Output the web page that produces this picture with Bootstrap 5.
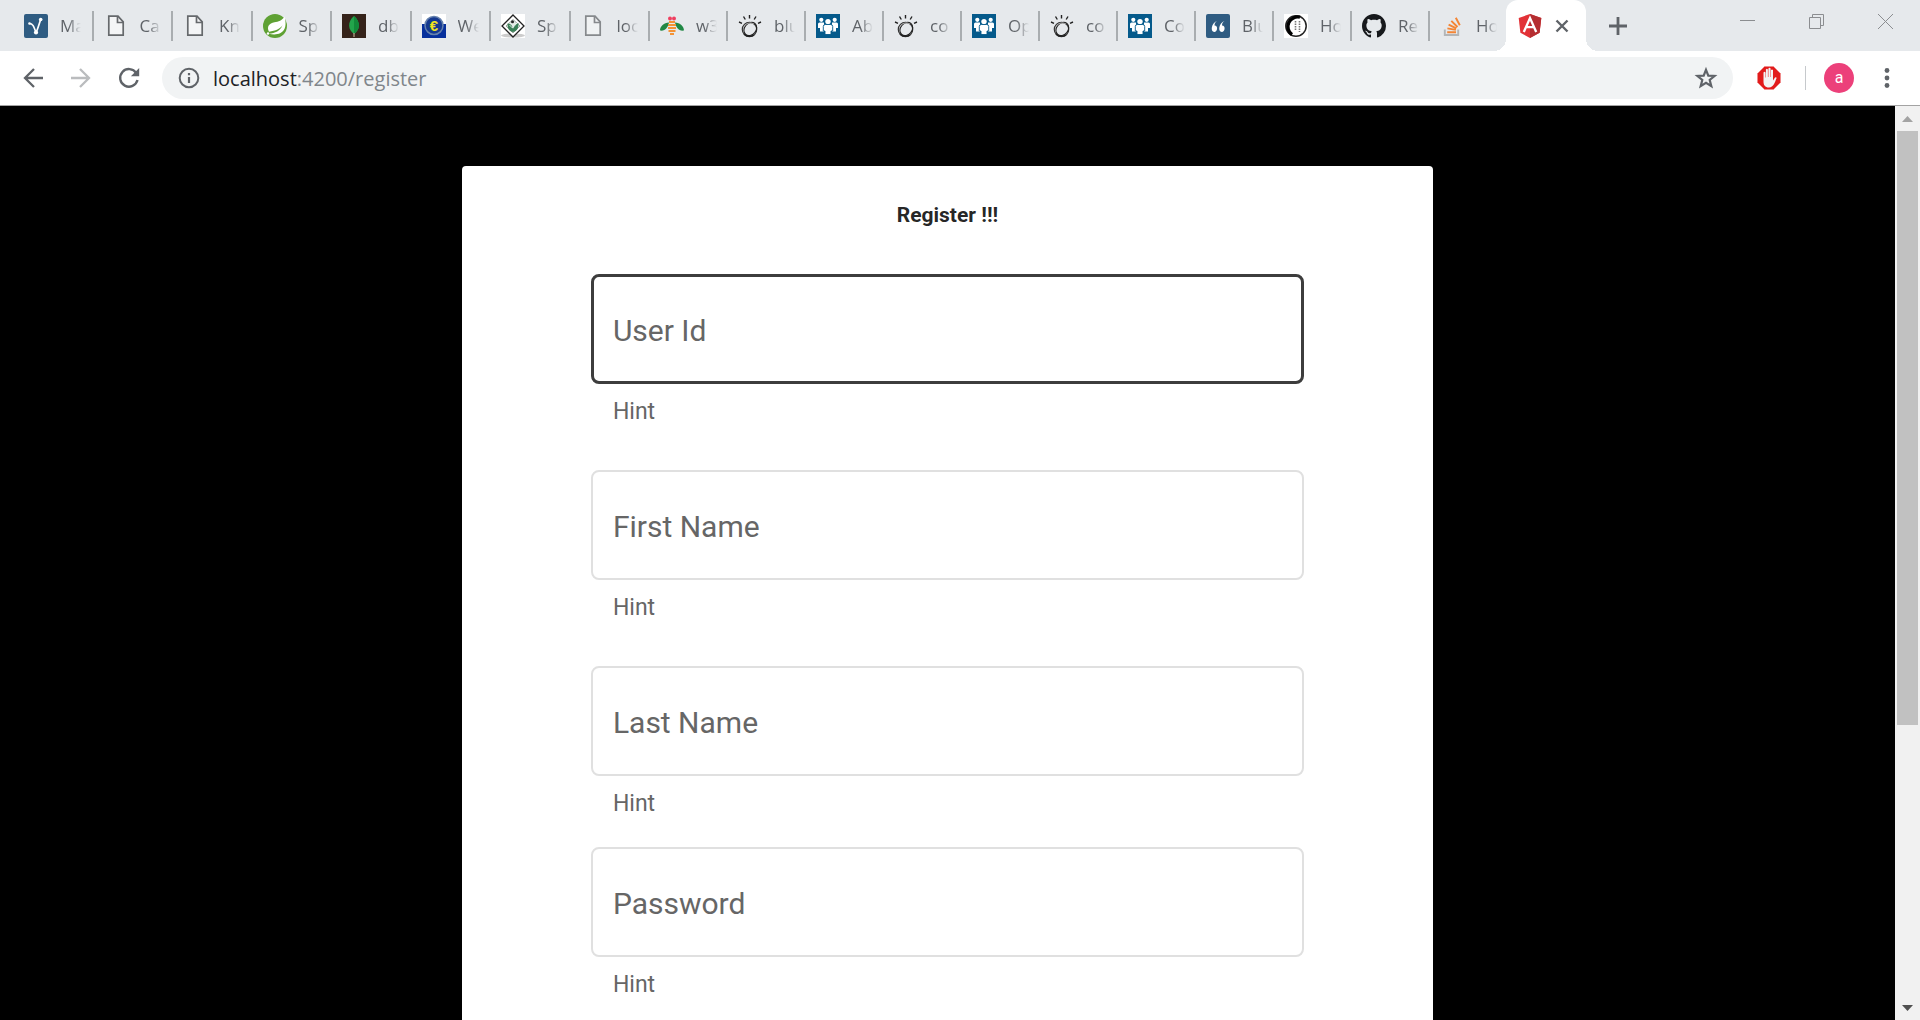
<!DOCTYPE html>
<html lang="en">
<head>
<meta charset="utf-8">
<meta name="viewport" content="width=device-width, initial-scale=1">
<title>Register</title>
<link href="https://cdn.jsdelivr.net/npm/bootstrap@5.3.0/dist/css/bootstrap.min.css" rel="stylesheet">
<style>
  .chrome { font-family: "Open Sans", "Noto Sans", sans-serif; color: #5f6368; }
  .chrome svg, .side-bar svg { display: block; flex: none; }
  .tab-strip { height: 51px; background: #e6e9ec; padding-left: 14px; }
  .tab-group-a { flex: 0 1 636px; min-width: 0; }
  .tab-group-b { flex: 0 1 856px; min-width: 0; }
  .tab-item { flex: 1 1 0; min-width: 0; height: 30px; padding-left: 10px; border-right: 2px solid #a9adb0; color: #5f6368; }
  .tab-item.last-tab { border-right: 0; }
  .tab-text { margin-left: 12px; width: 21px; overflow: hidden; white-space: nowrap; font-size: 17px; line-height: 24px;
    -webkit-mask-image: linear-gradient(90deg, #000 40%, transparent); mask-image: linear-gradient(90deg, #000 40%, transparent); }
  .live-tab { position: relative; width: 80px; background: #fff; border-radius: 12px 12px 0 0; padding-left: 12px; gap: 12px; }
  .live-tab::before, .live-tab::after { content: ""; position: absolute; bottom: 0; width: 12px; height: 12px; }
  .live-tab::before { left: -12px; background: radial-gradient(circle at 0 0, transparent 12px, #fff 12px); }
  .live-tab::after { right: -12px; background: radial-gradient(circle at 100% 0, transparent 12px, #fff 12px); }
  .plain-btn { background: none; border: 0; padding: 0; color: inherit; display: flex; align-items: center; justify-content: center; flex: none; }
  .new-tab { width: 44px; margin-left: 10px; }
  .win-btn { width: 69px; height: 42px; color: #8b8d90; }
  .tool-bar { height: 55px; background: #fff; border-bottom: 1px solid #a3a3a3; padding: 0 21px 0 9px; }
  .nav-icon { width: 48px; height: 42px; }
  .address { height: 42px; border-radius: 21px; background: #f1f3f4; margin: 0 12px 0 9px; padding: 0 15px 0 16px; }
  .address-text { font-size: 20px; line-height: 28px; color: #80868b; margin-left: 13px; padding-top: 1px; }
  .address-text b { font-weight: 400; color: #202124; }
  .bar-line { width: 1px; height: 24px; background: #c6c9cc; margin: 0 18px 0 12px; }
  .avatar { width: 30px; height: 30px; border-radius: 50%; background: #ec407a; color: #fff; font: 16px/28px Roboto, sans-serif; margin-right: 21px; }
  .menu-btn { width: 24px; height: 30px; }
  .page-area { background: #000; min-height: 0; }
  .page-body { font-family: Roboto, sans-serif; padding-top: 60px; min-width: 0; }
  .register-card { width: 51.25%; border: 0; border-radius: 4px; padding: 34px 129px 0; color: rgba(0,0,0,.87); }
  .register-title { font-size: 21px; line-height: 30px; font-weight: 700; margin-bottom: 44px; }
  .field { margin-bottom: 44px; }
  .field-tight { margin-bottom: 29px; }
  .field-box { height: 110px; border: 2px solid #e0e0e0; border-radius: 8px; padding: 0 24px; font-size: 30px; box-shadow: none; }
  .field-box:focus { border-color: #e0e0e0; box-shadow: none; }
  .field-box.current, .field-box.current:focus { border: 3px solid #3d3d3d; }
  .field-label { padding-left: 22px; padding-top: 3px; font-size: 30px; line-height: 36px; color: #666; pointer-events: none; }
  .field-hint { font-size: 23px; line-height: 28px; color: #666; padding: 14px 22px 0; height: 42px; }
  .side-bar { width: 25px; background: #f1f1f1; flex: none; }
  .side-arrow { width: 25px; height: 25px; }
  .side-track { padding: 0 2px; }
  .side-thumb { background: #c1c1c1; height: 68.7%; }
</style>
</head>
<body class="vh-100 overflow-hidden d-flex flex-column">

<svg width="0" height="0" class="position-absolute" aria-hidden="true">
  <symbol id="i-file" viewBox="0 0 24 24"><path d="M4.800 2.200h9.200l5.200 5.600v13.400h-14.400z" fill="#f4f5f6" stroke="#66696c" stroke-width="1.700"/><path d="M13.500 2.500v6h5.600" fill="none" stroke="#66696c" stroke-width="1.700"/></symbol>
  <symbol id="i-graph" viewBox="0 0 24 24"><rect width="24" height="24" rx="2" fill="#2f5c82"/><path d="M5.500 9.500c3 0 4 2 6.500 9c1-1 3-8 4.700-13" fill="none" stroke="#fff" stroke-width="1.700"/><circle cx="5.500" cy="9.500" r="1.300" fill="#fff"/><circle cx="12" cy="18.500" r="2.100" fill="#fff"/><circle cx="16.700" cy="5.500" r="1.800" fill="#fff"/></symbol>
  <symbol id="i-spring" viewBox="0 0 24 24"><circle cx="12" cy="12" r="12" fill="#5fa134"/><path d="M21.500 2.500c2 7 1.500 14-4 16.500c-4 2-8 1.500-11.500.8c6-.4 11.500-3 13.500-8.500c-2 3.500-7 5.500-13.500 6.500c-2.500-5 0-8.500 5.500-9.500c4-.7 7.500-1.700 10-5.800z" fill="#fff"/><circle cx="5" cy="19.500" r="1.200" fill="#fff"/></symbol>
  <symbol id="i-leaf" viewBox="0 0 24 24"><rect width="24" height="24" fill="#35231a"/><path d="M12 2c7 6 6 14 0 18c-6-4-7-12 0-18z" fill="#22a54b"/><path d="M12 2c7 6 6 14 0 18z" fill="#128a3a"/><path d="M12 19v4" stroke="#b9a48c" stroke-width="1.200"/></symbol>
  <symbol id="i-diamond" viewBox="0 0 24 24"><rect width="24" height="24" fill="#fff"/><ellipse cx="12" cy="21.500" rx="12" ry="2" fill="#ccc"/><path d="M12 1l11 11l-11 11l-11-11z" fill="#fff" stroke="#222" stroke-width="1.300"/><path d="M12 5.500l7 6.500l-7 7l-7-7z" fill="#e6ede8" stroke="#8a958d" stroke-width=".800"/><path d="M6.500 9.500c3 0 5 2 5.500 5.500c.5-3 2-5 5.500-6c0 5-1 8-5.500 9c-4.500-1-5.500-4-5.500-8.500z" fill="#3a7f56"/><circle cx="11.500" cy="7.800" r="1.500" fill="#222"/><path d="M8.500 11l3 3l5.500-6" fill="none" stroke="#fff" stroke-width=".800"/></symbol>
  <symbol id="i-bee" viewBox="0 0 24 24"><path d="M9 8.500c-5 0-9 4-9 8c5 1 8-3 9-8zM15 8.500c5 0 9 4 9 8c-5 1-8-3-9-8z" fill="#218845"/><circle cx="10" cy="4.500" r="2" fill="#ef4060"/><circle cx="14" cy="4.500" r="2" fill="#ef4060"/><path d="M9 8h6M8 11h8M8 14h8M8.500 17h7M10 20h4" stroke="#f49335" stroke-width="1.800"/></symbol>
  <symbol id="i-watson" viewBox="0 0 24 24"><circle cx="11.500" cy="15.500" r="7.200" fill="none" stroke="#333" stroke-width="1.200"/><ellipse cx="12.300" cy="15" rx="7.200" ry="5.800" fill="none" stroke="#222" stroke-width="1.100" transform="rotate(-50 12.300 15)"/><path d="M6 20q4 4 10 1" fill="none" stroke="#222" stroke-width="1.500"/><path d="M6 12q5-5 10-2" fill="none" stroke="#aaa"/><path d="M11.500 1v3.500M5.500 2.500l1.800 3M18 2.500l-1.800 3M1 8l3 1.400M23 8l-3 1.400" stroke="#222" stroke-width="1.400"/></symbol>
  <symbol id="i-people" viewBox="0 0 24 24"><rect width="24" height="24" fill="#055a8b"/><g fill="#fff"><circle cx="5.300" cy="5.800" r="2.100"/><circle cx="18.700" cy="5.800" r="2.100"/><path d="M2 10q0-1.500 1.500-1.500h4.500v9h-4v-3.500h-2zM22 10q0-1.500-1.500-1.500h-4.500v9h4v-3.500h2z"/><circle cx="12" cy="7.600" r="2.700"/><path d="M7.300 12.500q0-2 2-2h5.400q2 0 2 2v4.500h-1.700v3.500h-6v-3.500h-1.700z" stroke="#055a8b" stroke-width=".900"/></g></symbol>
  <symbol id="i-quote" viewBox="0 0 24 24"><rect width="24" height="24" rx="2" fill="#2f5c82"/><path d="M11 7c-2 1-2.500 3-2.500 4.500c4 0 3 6.500-.2 6.500c-4.300 0-3-9 2.700-11zM18.500 7c-2 1-2.500 3-2.500 4.500c4 0 3 6.500-.2 6.500c-4.300 0-3-9 2.700-11z" fill="#fff"/></symbol>
  <symbol id="i-ring" viewBox="0 0 24 24"><rect width="24" height="24" fill="#fff"/><circle cx="12" cy="12" r="10.200" fill="none" stroke="#222" stroke-width="1.500"/><path d="M16 3.200a9.800 9.800 0 0 0-8 17.500" fill="none" stroke="#000" stroke-width="3.400"/><path d="M11.500 7v10M15.500 7v11" stroke="#777" stroke-width="1.600" stroke-dasharray="1.500 1"/></symbol>
  <symbol id="i-github" viewBox="0 0 16 16"><path fill="#17191c" d="M8 0C3.580 0 0 3.580 0 8c0 3.540 2.290 6.530 5.470 7.590.4.070.55-.17.55-.38 0-.19-.01-.82-.01-1.490-2.010.37-2.530-.49-2.690-.94-.09-.23-.48-.94-.82-1.130-.28-.15-.68-.52-.01-.53.63-.01 1.080.58 1.230.82.72 1.210 1.870.87 2.330.66.07-.52.28-.87.51-1.070-1.780-.2-3.640-.89-3.640-3.950 0-.87.31-1.590.82-2.150-.08-.2-.36-1.020.08-2.120 0 0 .67-.21 2.200.82.64-.18 1.320-.27 2-.27s1.360.09 2 .27c1.530-1.040 2.200-.82 2.200-.82.44 1.100.16 1.920.08 2.120.51.56.82 1.270.82 2.150 0 3.070-1.870 3.750-3.650 3.950.29.25.54.73.54 1.480 0 1.070-.01 1.930-.01 2.200 0 .21.15.46.55.38A8.010 8.010 0 0 0 16 8c0-4.420-3.580-8-8-8z"/></symbol>
  <symbol id="i-stack" viewBox="0 0 24 24"><path d="M4.800 15.500v5.500h13.400v-5.500" fill="none" stroke="#b3b5b7" stroke-width="1.900"/><path d="M7.200 18.200h8.800M7.400 14.400l8.500 1.500M8.600 10.600l7.700 3.800M11.300 6.800l6.200 6.200M15.800 3.800l4 7.400" stroke="#f48534" stroke-width="1.900"/></symbol>
  <symbol id="i-angular" viewBox="0 0 24 24"><path d="M12 0l11.300 4l-1.700 14.700l-9.600 5.300l-9.600-5.300l-1.700-14.700z" fill="#e23237"/><path d="M12 0l11.300 4l-1.700 14.700l-9.600 5.300z" fill="#b52e31"/><path d="M5.800 18l6.200-14l6.200 14M8.800 13.200h6.400" fill="none" stroke="#fff" stroke-width="2.300"/></symbol>
</svg>

<header class="chrome flex-shrink-0">
  <div class="tab-strip d-flex">
    <div class="tab-group-a d-flex align-items-center">
      <a href="#" class="tab-item d-flex align-items-center text-decoration-none"><svg width="24" height="24"><use href="#i-graph"/></svg><span class="tab-text">Ma</span></a>
      <a href="#" class="tab-item d-flex align-items-center text-decoration-none"><svg width="24" height="24"><use href="#i-file"/></svg><span class="tab-text">Ca</span></a>
      <a href="#" class="tab-item d-flex align-items-center text-decoration-none"><svg width="24" height="24"><use href="#i-file"/></svg><span class="tab-text">Kn</span></a>
      <a href="#" class="tab-item d-flex align-items-center text-decoration-none"><svg width="24" height="24"><use href="#i-spring"/></svg><span class="tab-text">Sp</span></a>
      <a href="#" class="tab-item d-flex align-items-center text-decoration-none"><svg width="24" height="24"><use href="#i-leaf"/></svg><span class="tab-text">db</span></a>
      <a href="#" class="tab-item d-flex align-items-center text-decoration-none"><svg width="24" height="24" viewBox="0 0 24 24"><rect width="24" height="24" fill="#fff"/><path d="M0 10h24v14h-24z" fill="#07309c"/><circle cx="12" cy="11.500" r="9" fill="#15398f" stroke="#6682ad" stroke-width="1.500"/><text x="12" y="17" text-anchor="middle" font-family="Liberation Sans" font-weight="700" font-size="15" fill="#f1e51d">€</text></svg><span class="tab-text">We</span></a>
      <a href="#" class="tab-item d-flex align-items-center text-decoration-none"><svg width="24" height="24"><use href="#i-diamond"/></svg><span class="tab-text">Sp</span></a>
      <a href="#" class="tab-item d-flex align-items-center text-decoration-none"><svg width="24" height="24" opacity=".75"><use href="#i-file"/></svg><span class="tab-text">loc</span></a>
    </div>
    <div class="tab-group-b d-flex align-items-center">
      <a href="#" class="tab-item d-flex align-items-center text-decoration-none"><svg width="24" height="24"><use href="#i-bee"/></svg><span class="tab-text">w3</span></a>
      <a href="#" class="tab-item d-flex align-items-center text-decoration-none"><svg width="24" height="24"><use href="#i-watson"/></svg><span class="tab-text">blu</span></a>
      <a href="#" class="tab-item d-flex align-items-center text-decoration-none"><svg width="24" height="24"><use href="#i-people"/></svg><span class="tab-text">Ab</span></a>
      <a href="#" class="tab-item d-flex align-items-center text-decoration-none"><svg width="24" height="24"><use href="#i-watson"/></svg><span class="tab-text">co</span></a>
      <a href="#" class="tab-item d-flex align-items-center text-decoration-none"><svg width="24" height="24"><use href="#i-people"/></svg><span class="tab-text">Op</span></a>
      <a href="#" class="tab-item d-flex align-items-center text-decoration-none"><svg width="24" height="24"><use href="#i-watson"/></svg><span class="tab-text">co</span></a>
      <a href="#" class="tab-item d-flex align-items-center text-decoration-none"><svg width="24" height="24"><use href="#i-people"/></svg><span class="tab-text">Co</span></a>
      <a href="#" class="tab-item d-flex align-items-center text-decoration-none"><svg width="24" height="24"><use href="#i-quote"/></svg><span class="tab-text">Blu</span></a>
      <a href="#" class="tab-item d-flex align-items-center text-decoration-none"><svg width="24" height="24"><use href="#i-ring"/></svg><span class="tab-text">Ho</span></a>
      <a href="#" class="tab-item d-flex align-items-center text-decoration-none"><svg width="24" height="24"><use href="#i-github"/></svg><span class="tab-text">Re</span></a>
      <a href="#" class="tab-item last-tab d-flex align-items-center text-decoration-none"><svg width="24" height="24"><use href="#i-stack"/></svg><span class="tab-text">Ho</span></a>
    </div>
    <div class="live-tab d-flex align-items-center flex-shrink-0">
      <svg width="24" height="24"><use href="#i-angular"/></svg>
      <button type="button" class="plain-btn" aria-label="Close tab"><svg width="16" height="16" viewBox="0 0 16 16"><path d="M2.500 2.500l11 11M13.500 2.500l-11 11" stroke="#5f6368" stroke-width="2.400"/></svg></button>
    </div>
    <button type="button" class="plain-btn new-tab" aria-label="New tab"><svg width="18" height="18" viewBox="0 0 18 18"><path d="M9 0v18M0 9h18" stroke="#5f6368" stroke-width="2.800"/></svg></button>
    <div class="d-flex ms-auto">
      <button type="button" class="plain-btn win-btn" aria-label="Minimize"><svg width="15" height="15" viewBox="0 0 15 15"><path d="M0 6.500h15" stroke="currentColor"/></svg></button>
      <button type="button" class="plain-btn win-btn" aria-label="Restore"><svg width="15" height="15" viewBox="0 0 15 15"><path d="M.5 3.500h11v11h-11zM3.500 3.500v-3h11v11h-3" fill="none" stroke="currentColor"/></svg></button>
      <button type="button" class="plain-btn win-btn" aria-label="Close"><svg width="15" height="15" viewBox="0 0 15 15"><path d="M0 0l15 15M15 0l-15 15" stroke="currentColor"/></svg></button>
    </div>
  </div>

  <div class="tool-bar d-flex align-items-center">
    <button type="button" class="plain-btn nav-icon" aria-label="Back"><svg width="20" height="20" viewBox="0 0 20 20"><path d="M20 10h-18M11 1l-9 9l9 9" fill="none" stroke="#5f6368" stroke-width="2.300"/></svg></button>
    <button type="button" class="plain-btn nav-icon" aria-label="Forward"><svg width="20" height="20" viewBox="0 0 20 20"><path d="M0 10h18M9 1l9 9l-9 9" fill="none" stroke="#babcbe" stroke-width="2.300"/></svg></button>
    <button type="button" class="plain-btn nav-icon" aria-label="Reload"><svg width="22" height="22" viewBox="0 0 22 22"><path d="M18.300 6a8.800 8.800 0 1 0 1.200 7" fill="none" stroke="#5f6368" stroke-width="2.400"/><path d="M21.200 1v8.300h-8.300z" fill="#5f6368"/></svg></button>
    <div class="address d-flex align-items-center flex-grow-1">
      <svg width="22" height="22" viewBox="0 0 22 22"><circle cx="11" cy="11" r="9.300" fill="none" stroke="#5f6368" stroke-width="2"/><path d="M11 10v6M11 6v2.200" stroke="#5f6368" stroke-width="2.200"/></svg>
      <span class="address-text"><b>localhost</b>:4200/register</span>
      <button type="button" class="plain-btn ms-auto" aria-label="Bookmark"><svg width="24" height="24" viewBox="0 0 24 24"><path d="M12 3.800l2.300 5.800l6.300.4l-4.900 4l1.600 6.100l-5.300-3.400l-5.300 3.400l1.600-6.100l-4.900-4l6.300-.4z" fill="none" stroke="#5f6368" stroke-width="2.200"/></svg></button>
    </div>
    <button type="button" class="plain-btn nav-icon" aria-label="Ad blocker"><svg width="24" height="24" viewBox="0 0 24 24"><path d="M7.500 .500h9l7 7v9l-7 7h-9l-7-7v-9z" fill="#e21b1b" stroke="#e88" stroke-width=".500"/><path d="M12 21.500c-4 0-5.500-2.500-5.500-6v-9q1-1.300 2 0v5h.4v-8q1-1.300 2 0v7.500h.5v-8.500q1.200-1.300 2.200 0v8.500h.4v-7q1-1.200 2 0v10.500l2-3q1.400-.6 1.600.6c-1.600 4-3 9.400-7.600 9.400z" fill="#f3f3f3"/></svg></button>
    <div class="bar-line"></div>
    <button type="button" class="plain-btn avatar">a</button>
    <button type="button" class="plain-btn menu-btn" aria-label="Menu"><svg width="6" height="20" viewBox="0 0 6 20" fill="#5f6368"><circle cx="3" cy="2.500" r="2.400"/><circle cx="3" cy="10" r="2.400"/><circle cx="3" cy="17.500" r="2.400"/></svg></button>
  </div>
</header>

<div class="page-area d-flex flex-grow-1">
  <main class="page-body flex-grow-1 overflow-hidden">
    <form class="register-card card mx-auto">
      <h1 class="register-title text-center">Register !!!</h1>
      <div class="field">
        <div class="position-relative">
          <input type="text" id="userId" class="form-control field-box current">
          <label for="userId" class="field-label position-absolute top-0 start-0 h-100 d-flex align-items-center">User Id</label>
        </div>
        <div class="field-hint">Hint</div>
      </div>
      <div class="field">
        <div class="position-relative">
          <input type="text" id="firstName" class="form-control field-box">
          <label for="firstName" class="field-label position-absolute top-0 start-0 h-100 d-flex align-items-center">First Name</label>
        </div>
        <div class="field-hint">Hint</div>
      </div>
      <div class="field field-tight">
        <div class="position-relative">
          <input type="text" id="lastName" class="form-control field-box">
          <label for="lastName" class="field-label position-absolute top-0 start-0 h-100 d-flex align-items-center">Last Name</label>
        </div>
        <div class="field-hint">Hint</div>
      </div>
      <div class="field">
        <div class="position-relative">
          <input type="password" id="password" class="form-control field-box">
          <label for="password" class="field-label position-absolute top-0 start-0 h-100 d-flex align-items-center">Password</label>
        </div>
        <div class="field-hint">Hint</div>
      </div>
    </form>
  </main>
  <div class="side-bar d-flex flex-column" aria-hidden="true">
    <div class="side-arrow d-flex align-items-center justify-content-center"><svg width="11" height="6" viewBox="0 0 11 6"><path d="M0 6h11l-5.500-6z" fill="#a3a3a3"/></svg></div>
    <div class="side-track flex-grow-1"><div class="side-thumb"></div></div>
    <div class="side-arrow d-flex align-items-center justify-content-center"><svg width="11" height="6" viewBox="0 0 11 6"><path d="M0 0h11l-5.500 6z" fill="#505050"/></svg></div>
  </div>
</div>

<script src="https://cdn.jsdelivr.net/npm/bootstrap@5.3.0/dist/js/bootstrap.bundle.min.js"></script>
</body>
</html>
